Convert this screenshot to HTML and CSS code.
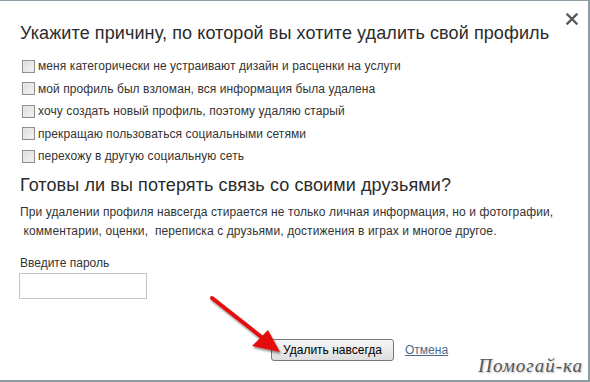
FILE: index.html
```html
<!DOCTYPE html>
<html>
<head>
<meta charset="utf-8">
<link rel="stylesheet" href="styles.css">
</head>
<body>
<div class="dialog">
  <svg class="close" width="12" height="12" viewBox="0 0 12 12"><path d="M1.5 1.5 L10.5 10.5 M10.5 1.5 L1.5 10.5" stroke="#5a5a5a" stroke-width="2.4" stroke-linecap="square"/></svg>
  <h1 class="title">Укажите причину, по которой вы хотите удалить свой профиль</h1>
  <ul class="reasons">
    <li><span class="cb"></span>меня категорически не устраивают дизайн и расценки на услуги</li>
    <li><span class="cb"></span>мой профиль был взломан, вся информация была удалена</li>
    <li><span class="cb"></span>хочу создать новый профиль, поэтому удаляю старый</li>
    <li><span class="cb"></span>прекращаю пользоваться социальными сетями</li>
    <li><span class="cb"></span>перехожу в другую социальную сеть</li>
  </ul>
  <h2 class="title2">Готовы ли вы потерять связь со своими друзьями?</h2>
  <p class="info">При удалении профиля навсегда стирается не только личная информация, но и фотографии,<br>&nbsp;комментарии, оценки, &nbsp;переписка с друзьями, достижения в играх и многое другое.</p>
  <div class="pass">
    <div class="pass-label">Введите пароль</div>
    <div class="pass-input"></div>
  </div>
  <div class="actions">
    <span class="btn">Удалить навсегда</span>
    <span class="cancel">Отмена</span>
  </div>
  <svg class="arrow" width="90" height="70" viewBox="0 0 90 70">
    <defs>
      <filter id="sh" x="-20%" y="-20%" width="140%" height="140%">
        <feGaussianBlur in="SourceAlpha" stdDeviation="1.2"/>
        <feOffset dx="1" dy="2"/>
        <feComponentTransfer><feFuncA type="linear" slope="0.45"/></feComponentTransfer>
        <feMerge><feMergeNode/><feMergeNode in="SourceGraphic"/></feMerge>
      </filter>
    </defs>
    <g filter="url(#sh)">
      <line x1="4" y1="4" x2="56" y2="45" stroke="#e41010" stroke-width="4" stroke-linecap="round"/>
      <polygon points="72,58 44,52 60,36" fill="#e41010"/>
    </g>
  </svg>
  <div class="watermark">Помогай-ка</div>
</div>
</body>
</html>
```
FILE: styles.css
```css
html, body {
  margin: 0;
  padding: 0;
  background: #fff;
}
.dialog {
  position: relative;
  box-sizing: border-box;
  width: 590px;
  height: 382px;
  border-top: 1px solid #8c9ca2;
  border-right: 2px solid #8c9ca2;
  border-bottom: 2px solid #8c9ca2;
  padding: 0 0 0 20px;
  font-family: "Liberation Sans", Arial, sans-serif;
  color: #333;
}
.close {
  position: absolute;
  right: 10px;
  top: 12px;
}
.title {
  margin: 0;
  padding-top: 20px;
  font-size: 18px;
  font-weight: normal;
  line-height: 24px;
  color: #2b2b2b;
  letter-spacing: 0.1px;
}
.reasons {
  list-style: none;
  margin: 10px 0 0 2px;
  padding: 0;
}
.reasons li {
  display: flex;
  align-items: center;
  height: 22.5px;
  font-size: 12px;
  letter-spacing: 0.08px;
}
.cb {
  box-sizing: border-box;
  width: 13px;
  height: 13px;
  margin-right: 3px;
  border: 1px solid #8f8f8f;
  background: linear-gradient(135deg, #dcdcdc, #f6f6f6);
  box-shadow: inset 0 0 0 1px #e8e8e8;
}
.title2 {
  margin: 5px 0 0;
  font-size: 18px;
  font-weight: normal;
  line-height: 24px;
  color: #2b2b2b;
  letter-spacing: 0.1px;
}
.info {
  margin: 6px 0 0;
  font-size: 12px;
  line-height: 19px;
  letter-spacing: 0.1px;
}
.pass {
  margin-top: 15px;
}
.pass-label {
  font-size: 12px;
  line-height: 15px;
}
.pass-input {
  box-sizing: border-box;
  width: 128px;
  height: 26px;
  margin: 2px 0 0 -1px;
  border: 1px solid #c4c4c4;
}
.actions {
  display: flex;
  align-items: center;
  margin: 40px 0 0 251px;
}
.btn {
  box-sizing: border-box;
  width: 123px;
  height: 22px;
  line-height: 20px;
  text-align: center;
  font-size: 12px;
  color: #000;
  border: 1px solid #777;
  border-radius: 3px;
  background: linear-gradient(#f6f6f6, #dedede);
}
.cancel {
  margin-left: 11px;
  font-size: 12px;
  color: #4a6a8a;
  text-decoration: underline;
}
.arrow {
  position: absolute;
  left: 208px;
  top: 293px;
}
.watermark {
  position: absolute;
  right: 5px;
  bottom: 3px;
  font-family: "Liberation Serif", serif;
  font-style: italic;
  font-size: 19px;
  letter-spacing: 1px;
  color: #555;
  text-shadow: 1px 1px 2px #bbb;
}
```
